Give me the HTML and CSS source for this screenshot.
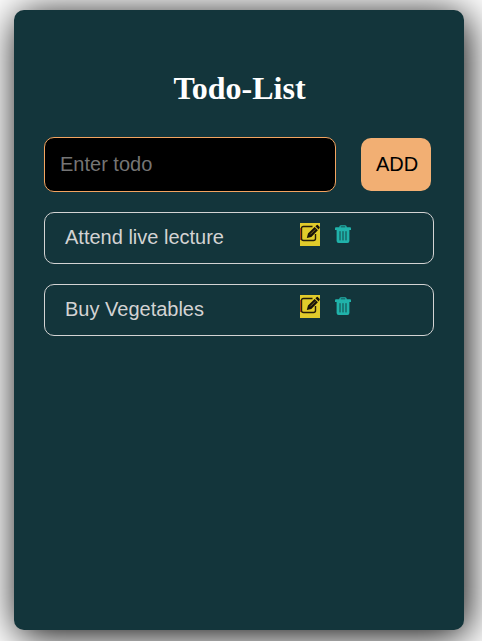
FILE: index.html
```html
<!DOCTYPE html>
<html lang="en">
<head>
<meta charset="utf-8">
<title>Todo-List</title>
<link rel="stylesheet" href="styles.css">
</head>
<body>
<svg class="sprite" aria-hidden="true">
  <symbol id="edit" viewBox="0 0 20 23">
    <path d="M12.5 3.5H3.5Q1.5 3.5 1.5 5.5V15.5Q1.5 17.5 3.5 17.5H13.5Q15.5 17.5 15.5 15.5V11" fill="none" stroke="#251c08" stroke-width="1.4"/>
    <path d="M.6 5V17" stroke="#a31b12" stroke-width=".8"/>
    <path d="M6.8 15 8 10.6 14.6 4 17.9 7.3 11.3 13.9ZM15.4 3.2 16.8 1.9Q17.3 1.5 17.8 2L19.7 3.9Q20 4.5 19.5 5L18.7 6.4Z" fill="#171009"/>
    <path d="M10.3 11.4 15.3 6.4" stroke="#a89722" stroke-width=".7"/>
  </symbol>
  <symbol id="trash" viewBox="0 0 16 18">
    <path d="M5 3V1.8Q5 .9 5.9 .9H10.1Q11 .9 11 1.8V3" fill="none" stroke="#20b2aa" stroke-width="1.4"/>
    <path d="M1 2.2H15Q16 2.2 16 3.2V5H0V3.2Q0 2.2 1 2.2Z" fill="#20b2aa"/>
    <path d="M1.6 4.8H14.4V16Q14.4 18 12.4 18H3.6Q1.6 18 1.6 16Z" fill="#20b2aa"/>
    <path d="M5 6.2V15.4M8 6.2V15.4M11 6.2V15.4" stroke="#13353b" stroke-width=".9"/>
  </symbol>
</svg>
<main class="card">
  <h1 class="title">Todo-List</h1>
  <form class="entry">
    <input class="field" type="text" placeholder="Enter todo">
    <button class="add" type="button">ADD</button>
  </form>
  <ul class="list">
    <li class="item">
      <span class="label">Attend live lecture</span>
      <svg class="edit"><use href="#edit"/></svg>
      <svg class="trash"><use href="#trash"/></svg>
    </li>
    <li class="item">
      <span class="label">Buy Vegetables</span>
      <svg class="edit"><use href="#edit"/></svg>
      <svg class="trash"><use href="#trash"/></svg>
    </li>
  </ul>
</main>
</body>
</html>
```
FILE: styles.css
```css
* { box-sizing: border-box; }
body {
  margin: 0;
  height: 641px;
  padding: 10px 14px;
  background: #fff;
  overflow: hidden;
}
.sprite { display: none; }
.card {
  width: 450px;
  height: 620px;
  padding: 58px 30px 0;
  border-radius: 10px;
  background: #13353b;
  box-shadow: 3px 5px 40px #000;
}
.title {
  margin: 0;
  height: 40px;
  padding-left: 1px;
  font: bold 32px/40px "Liberation Serif", "Times New Roman", serif;
  color: #fff;
  text-align: center;
}
.entry {
  display: flex;
  align-items: center;
  gap: 25px;
  margin: 29px 0 20px;
}
.field {
  width: 292px;
  height: 55px;
  padding: 0 15px;
  border: 1px solid #f4a460;
  border-radius: 10px;
  background: #000;
  color: #fff;
  font: 20px "Liberation Sans", Arial, sans-serif;
}
.field::placeholder { color: #757575; }
.add {
  width: 70px;
  height: 53px;
  padding: 0 0 0 2px;
  border: 0;
  border-radius: 10px;
  background: #f2af73;
  color: #000;
  font: 20px "Liberation Sans", Arial, sans-serif;
}
.list {
  display: flex;
  flex-direction: column;
  gap: 20px;
  margin: 0;
  padding: 0;
  list-style: none;
}
.item {
  display: flex;
  align-items: flex-start;
  height: 52px;
  padding: 10px 20px;
  border: 1px solid #d3d3d3;
  border-radius: 10px;
}
.label {
  width: 235px;
  font: 20px/28px "Liberation Sans", Arial, sans-serif;
  color: #d3d3d3;
}
.edit {
  width: 20px;
  height: 23px;
  background: #e1cb2b;
}
.trash {
  width: 16px;
  height: 18px;
  margin: 2px 0 0 15px;
}
```
